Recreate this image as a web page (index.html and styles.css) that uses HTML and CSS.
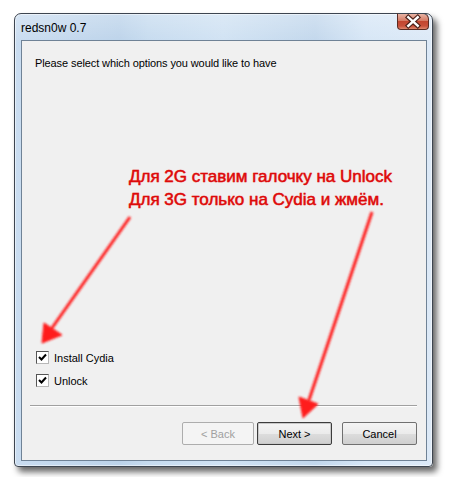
FILE: index.html
```html
<!DOCTYPE html>
<html lang="ru">
<head>
  <meta charset="UTF-8" />
  <title>redsn0w 0.7</title>
  <link rel="stylesheet" href="styles.css">
</head>
<body>

  <div class="page">
    <div class="window">
      <div class="titlebar">
        <span class="title">redsn0w 0.7</span>
        <span class="close">
          <svg width="32" height="17" viewBox="0 0 32 17">
            <path d="M11 4 L21 13 M21 4 L11 13" stroke="#4a2018" stroke-width="5" stroke-linecap="square" fill="none"/>
            <path d="M11 4 L21 13 M21 4 L11 13" stroke="#ffffff" stroke-width="2.6" stroke-linecap="square" fill="none"/>
          </svg>
        </span>
      </div>

      <div class="client">
        <p class="prompt">Please select which options you would like to have</p>

        <div class="spacer"></div>

        <div class="options">
          <label class="option">
            <span class="box">
              <svg width="11" height="11" viewBox="0 0 11 11"><path d="M2 5 L4.5 7.5 L9 2.5" stroke="#000" stroke-width="2" fill="none"/></svg>
            </span>
            Install Cydia
          </label>
          <label class="option">
            <span class="box">
              <svg width="11" height="11" viewBox="0 0 11 11"><path d="M2 5 L4.5 7.5 L9 2.5" stroke="#000" stroke-width="2" fill="none"/></svg>
            </span>
            Unlock
          </label>
        </div>

        <hr class="separator" />

        <div class="buttons">
          <button class="btn btn-back" disabled>&lt; Back</button>
          <button class="btn btn-next">Next &gt;</button>
          <button class="btn btn-cancel">Cancel</button>
        </div>
      </div>
    </div>

    <div class="annotation">
      <svg class="arrows" width="449" height="477" viewBox="0 0 449 477">
        <defs>
          <filter id="glow" x="-20%" y="-20%" width="140%" height="140%">
            <feGaussianBlur stdDeviation="0.9" />
          </filter>
        </defs>
        <g filter="url(#glow)" fill="#ff1a1a" stroke="#ff1a1a">
          <line x1="130" y1="217" x2="52" y2="328" stroke-width="3" />
          <polygon points="42,343 44,323 62,335" stroke-width="1" />
          <line x1="372" y1="212" x2="309" y2="400" stroke-width="3" />
          <polygon points="303,418 299,397 318,404" stroke-width="1" />
        </g>
      </svg>
      <div class="note">
        Для 2G ставим галочку на Unlock<br>
        Для 3G только на Cydia и жмём.
      </div>
    </div>
  </div>

</body>
</html>
```

FILE: styles.css
```css
body {
  margin: 0;
  background: #ffffff;
  font-family: 'Liberation Sans', Arial, sans-serif;
  font-size: 11px;
  color: #000;
}
.page {
  position: relative;
  width: 449px;
  height: 477px;
  padding: 13px 0 0 14px;
  box-sizing: border-box;
}
.window {
  width: 419px;
  height: 454px;
  box-sizing: border-box;
  border: 1px solid #3d4550;
  border-radius: 7px 7px 4px 4px;
  padding: 0 5px 5px 6px;
  display: flex;
  flex-direction: column;
  background:
    linear-gradient(180deg, rgba(255,255,255,0.25) 0%, rgba(255,255,255,0) 30px),
    linear-gradient(90deg, #c9dcf0 0%, #bcd3ea 25%, #c6dbef 32%, #d0e2f3 50%, #c2d7ec 72%, #d6e6f6 84%, #dce9f7 100%);
  box-shadow: 4px 5px 6px rgba(0,0,0,0.6), inset 0 0 0 1px rgba(255,255,255,0.5);
}
.titlebar {
  height: 26px;
  display: flex;
  align-items: flex-start;
}
.title {
  font-size: 12px;
  padding-top: 7px;
  color: #000;
}
.close {
  margin-left: auto;
  margin-top: -1px;
  margin-right: -2px;
  width: 32px;
  height: 17px;
  box-sizing: border-box;
  border: 1px solid #5b2b22;
  border-top-color: #3d4550;
  border-radius: 0 6px 4px 4px;
  background: linear-gradient(180deg, #e8b4a4 0%, #d67a64 45%, #c24630 50%, #c8503a 80%, #e08a70 100%);
  display: flex;
  align-items: center;
  justify-content: center;
}
.close svg {
  display: block;
}
.client {
  flex: 1;
  display: flex;
  flex-direction: column;
  background: #f0f0f0;
  border: 1px solid #6f8296;
}
.prompt {
  margin: 16px 0 0 13px;
  font-size: 11px;
  letter-spacing: -0.1px;
}
.spacer {
  flex: 1;
}
.options {
  display: flex;
  flex-direction: column;
  gap: 10px;
  padding-left: 14px;
}
.option {
  display: flex;
  align-items: center;
  gap: 5px;
  height: 13px;
}
.box {
  width: 11px;
  height: 11px;
  border: 1px solid #555;
  border-right-color: #b8b8b8;
  border-bottom-color: #b8b8b8;
  background: #fff;
  display: flex;
}
.separator {
  margin: 18px 9px 0 8px;
  border: none;
  border-top: 1px solid #a0a0a0;
  border-bottom: 1px solid #ffffff;
}
.buttons {
  display: flex;
  justify-content: flex-end;
  margin: 15px 9px 15px 0;
}
.btn {
  width: 75px;
  height: 23px;
  font-family: 'Liberation Sans', Arial, sans-serif;
  font-size: 11px;
  color: #000;
  border: 1px solid #707070;
  border-radius: 2px;
  background: linear-gradient(180deg, #f4f4f4 0%, #ebebeb 50%, #dddddd 51%, #cfcfcf 100%);
  padding: 0;
}
.btn-back {
  width: 72px;
  margin-right: 3px;
  color: #a0a0a0;
  border-color: #adadad;
  background: #f4f4f4;
}
.btn-next {
  margin-right: 10px;
  border-color: #3c3c3c;
  box-shadow: inset 0 0 0 1px #c8c8c8;
}
.annotation {
  position: absolute;
  top: 0;
  left: 0;
  width: 449px;
  height: 477px;
  pointer-events: none;
}
.arrows {
  position: absolute;
  top: 0;
  left: 0;
}
.note {
  position: absolute;
  top: 165px;
  left: 129px;
  font-family: 'Liberation Sans', Arial, sans-serif;
  font-size: 17px;
  line-height: 23px;
  color: #dd0a0a;
  -webkit-text-stroke: 0.4px #dd0a0a;
  text-shadow: 0 0 1px rgba(255,40,40,0.6);
}
```
